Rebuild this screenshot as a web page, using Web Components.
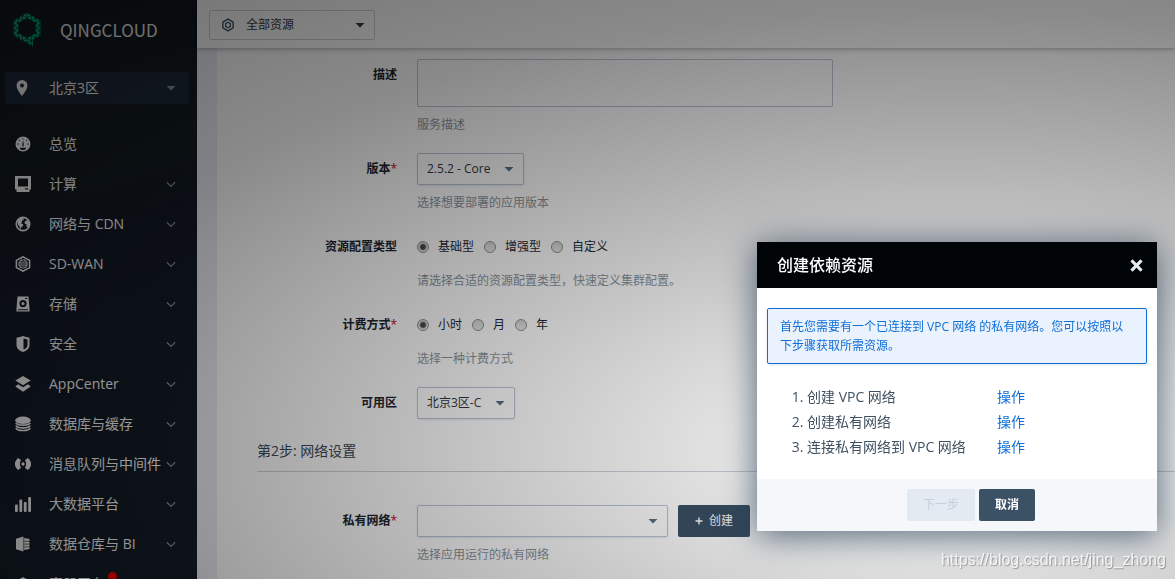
<!DOCTYPE html>
<html lang="zh-CN">
<head>
<meta charset="utf-8">
<title>QingCloud 控制台</title>
<style>
  html, body { height: 100%; margin: 0; }
  body { overflow: hidden; font: 12px/18px "Open Sans", "Noto Sans CJK SC", sans-serif; color: #27333f; background: #fff; }
</style>
</head>
<body>
<qc-app></qc-app>

<script>
const ICONS = {
  pin: '<path fill-rule="evenodd" d="M8 0a5.4 5.4 0 0 0-5.4 5.4C2.600 9.500 8 16 8 16s5.400-6.500 5.400-10.600A5.400 5.400 0 0 0 8 0zm0 3.400a2 2 0 1 1 0 4 2 2 0 0 1 0-4z"/>',
  gauge: '<path fill-rule="evenodd" d="M8 .5a7.500 7.500 0 1 0 0 15 7.500 7.500 0 0 0 0-15zM7.600 2.200h.8v1.400h-.8zM3.500 4.100l.6-.6 1 1-.6.6zM11.900 3.500l.6.6-1 1-.6-.6zM2.200 7.600h1.400v.8H2.200zM12.400 7.600h1.400v.8h-1.400zM7.600 5.500h.8l.3 4.200a.7.700 0 1 1-1.400 0zM5 11.800h6v1.300a5.500 5.500 0 0 1-6 0z"/>',
  compute: '<path fill-rule="evenodd" d="M0 0h16v13.500h-1.500V16h-13v-2.500H0zM3 2.500v8h10v-8zM10 12.300v1.200h3v-1.200z"/>',
  globe: '<circle cx="8" cy="8" r="6.700" fill="none" stroke="currentColor" stroke-width="1.700"/><path d="M2.500 5l3-3.200 3 .4.3 1.600-2 1 .4 1.500-1.600.6 2.800 1.700-.8 2-1.700 1-.4 2.400-1-3.400-1.500-2zM9.500 6.200l1.700-2 2.300.3 1 3.200-1.500 4-1.600-1.200.2-2-1.700-.8z"/>',
  wan: '<path fill="none" stroke="currentColor" stroke-width="1.500" d="M8 .8l6.600 3.600v7.200L8 15.200l-6.600-3.600V4.400z"/><circle cx="8" cy="8" r="4.700"/><path fill="none" stroke="#18212b" stroke-width=".7" d="M8 3.500v9M3.500 8h9M4.500 5.800h7M4.500 10.200h7M8 3.600c-3 3-3 6 0 9M8 3.600c3 3 3 6 0 9"/>',
  disk: '<path fill-rule="evenodd" d="M2.500.5h11l1 12.300v2.700h-13v-2.700zM3 13.200v1h10v-1zM8 4a3.600 3.600 0 1 0 0 7.200A3.600 3.600 0 0 0 8 4zm0 2a1.600 1.600 0 1 1 0 3.200A1.600 1.600 0 0 1 8 6zM10 2v1h2.300V2z"/>',
  shield: '<path fill-rule="evenodd" d="M1.500 1.800Q5 .9 8 0q3 .9 6.500 1.800V9c0 3.700-3 5.700-6.500 7-3.500-1.300-6.500-3.300-6.500-7zM8.500 2.400v11.200c2.300-1.100 4-2.400 4-4.900V3.400z"/>',
  layers: '<path d="M8 0l7.700 4.600L8 9.200.3 4.600z"/><path d="M3 8.300l5 3 5-3 2.700 2.300L8 15.800.3 10.600z"/>',
  db: '<ellipse cx="8" cy="4.300" rx="7.800" ry="3.700"/><path fill="none" stroke="currentColor" stroke-width="1.700" d="M.9 6.800c1 3.200 13.200 3.200 14.200 0M.9 9.400c1 3.200 13.200 3.200 14.200 0M.9 12c1 3.300 13.200 3.300 14.200 0"/>',
  queue: '<circle cx="8" cy="8" r="1.700"/><path d="M3 2L6 4Q3.800 8 6 12L3 14Q-3.400 8 3 2zM13 2L10 4Q12.200 8 10 12L13 14Q19.400 8 13 2z"/>',
  bars: '<rect x="0" y="8.500" width="2.800" height="7.500" rx="1"/><rect x="4.400" y="3.500" width="2.800" height="12.500" rx="1"/><rect x="8.800" y="6" width="2.800" height="10" rx="1"/><rect x="13.200" y="1" width="2.800" height="15" rx="1"/>',
  warehouse: '<path d="M1 2.800L8.500.5v15L1 13.200z"/><path d="M9.200 2l5.300 1v1.800l-1.200.6 1.200.5v1.700l-1.200.5 1.200.5v1.700l-1.200.5 1.200.5v1.700l-5.300 1z"/><path stroke="#18212b" stroke-width=".7" d="M9.500 5.300h4M9.500 8.100h4M9.500 10.900h4"/>',
  cube: '<path d="M8 1l7 4v6.500L8 15.500 1 11.500V5z"/>',
  hex: '<path fill="none" stroke="currentColor" stroke-width="1.600" stroke-linejoin="round" d="M8 1.200l5.900 3.400v6.800L8 14.800l-5.900-3.400V4.600z"/><path fill="none" stroke="currentColor" stroke-width="1.500" d="M8 4.900l2.700 1.500v3.200L8 11.100 5.300 9.600V6.400z"/>',
  chevron: '<path fill="none" stroke="currentColor" stroke-width="1.300" d="M3.800 6.200L8 10.400l4.200-4.200"/>',
  caret: '<path d="M3.500 6h9L8 10.500z"/>',
  close: '<path fill="none" stroke="currentColor" stroke-width="3.800" d="M1.800 1.800l12.400 12.400M14.200 1.800L1.800 14.200"/>',
  plus: '<path fill="none" stroke="currentColor" stroke-width="2.800" d="M8 1v14M1 8h14"/>'
};

class Base extends HTMLElement {
  connectedCallback() {
    if (this.shadowRoot) return;
    this.attachShadow({ mode: 'open' }).innerHTML =
      `<style>*{box-sizing:border-box}:host([hidden]){display:none}${this.css()}</style>${this.html()}`;
  }
  a(name) { return this.getAttribute(name) || ''; }
}

customElements.define('qc-icon', class extends Base {
  css() { return ':host{display:block;flex:none;width:16px;height:16px}svg{display:block;width:100%;height:100%}'; }
  html() { return `<svg viewBox="0 0 16 16" fill="currentColor" aria-hidden="true">${ICONS[this.a('name')]}</svg>`; }
});

customElements.define('qc-logo', class extends Base {
  css() { return `
    :host{display:block}
    a{display:flex;align-items:center;gap:18px;color:#fff;text-decoration:none;
      font:17px/32px "Noto Sans CJK SC",sans-serif}
    svg{width:30px;height:36px;flex:none}
    .word{color:#ececec}`; }
  html() {
    /* Triangular lattice with 5-unit edges, centred on (15,16), cut into the hexagonal ring. */
    let d = '';
    for (let k = -3; k <= 3; k++) d += `M${15 + 4.33 * k} 0v36`;
    for (let k = -7; k <= 7; k++) d += `M0 ${16 + 5 * k - 8.66}L30 ${16 + 5 * k + 8.66}M0 ${16 + 5 * k + 8.66}L30 ${16 + 5 * k - 8.66}`;
    return `<a href="#"><svg viewBox="0 0 30 36" aria-hidden="true">
      <defs><clipPath id="q"><path clip-rule="evenodd" d="M15 .5l13.500 7.800v15.400L21 28v7l-6-4L1.500 23.700V8.300zM15 6l-8.700 5v10l8.700 5 8.700-5V11z"/></clipPath></defs>
      <g clip-path="url(#q)"><path fill="#00c586" d="M0 0h30v36H0z"/><path fill="none" stroke="#12181e" stroke-width=".8" d="${d}"/></g>
    </svg><span class="word">QINGCLOUD</span></a>`; }
});

customElements.define('qc-nav-item', class extends Base {
  css() { return `
    :host{display:block}
    a{display:flex;align-items:center;height:40px;padding:0 18px 0 15px;color:#fff;text-decoration:none;font-size:14px;line-height:20px}
    .text{position:relative;margin-left:18px;flex:1;white-space:nowrap}
    .more{width:16px;color:#8490a0;margin-left:-16px}
    .dot{position:absolute;left:59px;top:-2px;width:9px;height:9px;border-radius:50%;background:#f00}`; }
  html() { return `
    <a href="#"><qc-icon name="${this.a('icon')}"></qc-icon>
      <span class="text"><slot></slot>${this.hasAttribute('badge') ? '<i class="dot"></i>' : ''}</span>
      ${this.hasAttribute('leaf') ? '' : '<qc-icon class="more" name="chevron"></qc-icon>'}</a>`; }
});

customElements.define('qc-sidebar', class extends Base {
  css() { return `
    :host{display:block;width:197px;flex:none;overflow:hidden;background:linear-gradient(165deg,#12181e 0,#141d22 30%,#141a28 45%,#151f29 100%)}
    qc-logo{padding:12px 12px 24px}
    .zone{display:flex;align-items:center;width:184px;height:32px;margin:0 5px 20px;padding:0 10px 0 9px;border:0;border-radius:2px;
      background:#1f2a3a;color:#f4f4f4;font:inherit;font-size:14px}
    .zone span{flex:1;text-align:left;margin-left:19px}
    .zone .more{width:16px;color:#8490a0}
    nav{display:block}`; }
  html() {
    const items = [['gauge','总览','leaf'],['compute','计算'],['globe','网络与 CDN'],['wan','SD-WAN'],['disk','存储'],['shield','安全'],
      ['layers','AppCenter'],['db','数据库与缓存'],['queue','消息队列与中间件'],['bars','大数据平台'],['warehouse','数据仓库与 BI'],['cube','容器平台','leaf badge']];
    return `<qc-logo></qc-logo>
      <button class="zone" type="button"><qc-icon name="pin"></qc-icon><span>北京3区</span><qc-icon class="more" name="caret"></qc-icon></button>
      <nav>${items.map(i => `<qc-nav-item icon="${i[0]}" ${i[2] || ''}>${i[1]}</qc-nav-item>`).join('')}</nav>`;
  }
});

customElements.define('qc-topbar', class extends Base {
  css() { return `
    :host{display:flex;align-items:center;height:48px;flex:none;padding:2px 12px 0;background:#fff;box-shadow:0 1px 5px rgba(0,0,0,.3);z-index:1}
    button{display:flex;align-items:center;width:166px;height:30px;padding:0 6px 0 11px;border:1px solid #ccd3db;border-radius:2px;
      background:#fff;color:#343945;font:inherit}
    span{flex:1;text-align:left;margin-left:11px}
    .hex{width:14px;height:14px;color:#40566c}`; }
  html() { return '<button type="button"><qc-icon class="hex" name="hex"></qc-icon><span>全部资源</span><qc-icon name="caret"></qc-icon></button>'; }
});

customElements.define('qc-button', class extends Base {
  css() { return `
    :host{display:block}
    button{display:flex;align-items:center;justify-content:center;gap:6px;height:32px;width:100%;padding:0 16px;border:0;border-radius:2px;
      background:#3b5166;color:#fff;font:inherit;white-space:nowrap}
    :host([strong]) button{font-weight:600}
    qc-icon{width:8px;height:8px}
    button:disabled{background:#e3eaf1;color:#c3cfda}`; }
  html() { return `<button type="button" ${this.hasAttribute('disabled') ? 'disabled' : ''}>${this.a('icon') ? `<qc-icon name="${this.a('icon')}"></qc-icon>` : ''}<slot></slot></button>`; }
});

customElements.define('qc-field', class extends Base {
  css() { return `
    :host{display:grid;grid-template-columns:140px minmax(0,1fr);column-gap:20px;margin-bottom:19px}
    .label{text-align:right;font-weight:600;line-height:32px;color:#1d2630}
    .label b{color:#d0021b;font-weight:400}
    .control{display:flex;align-items:center;gap:10px;min-height:32px}
    textarea,select{display:block;border:1px solid #bcc7d6;border-radius:2px;background:#fff;color:#343945;font:inherit}
    textarea{width:416px;max-width:100%;height:48px;resize:none}
    select{appearance:none;width:100%;height:32px;padding:0 24px 0 9px;box-shadow:0 1px 2px rgba(57,76,96,.12)}
    .select{position:relative}
    .s{width:98px}.m{width:107px}.l{width:251px}
    .select qc-icon{position:absolute;right:7px;top:8px;width:16px;height:16px;color:#5b7086;pointer-events:none}
    .radio{display:flex;align-items:center;gap:9px;color:#1f2b38}
    input{appearance:none;width:12px;height:12px;margin:0;border:1px solid #909090;border-radius:50%;background:linear-gradient(#d4d4d4,#ececec)}
    input:checked{background:radial-gradient(circle,#484848 0 2px,transparent 4px),linear-gradient(#d4d4d4,#ececec)}
    .hint{grid-column:2;margin:9px 0 0;color:#8c96a0}`; }
  html() {
    const kind = this.a('kind'), opts = this.a('options').split('|');
    const text = this.a('label') + (this.hasAttribute('required') ? '<b>*</b>' : '');
    let label = `<label class="label" for="c">${text}</label>`, control;
    if (kind === 'textarea') control = '<textarea id="c"></textarea>';
    else if (kind === 'select') control = `<div class="select ${this.a('size')}"><select id="c">${opts.map(o => `<option>${o}</option>`).join('')}</select><qc-icon name="caret"></qc-icon></div>`;
    else {
      label = `<span class="label" id="l">${text}</span>`;
      control = opts.map((o, i) => `<label class="radio"><input type="radio" name="r" ${i ? '' : 'checked'}><span>${o}</span></label>`).join('');
    }
    return `${label}<div class="control" ${kind === 'radio' ? 'role="radiogroup" aria-labelledby="l"' : ''}>${control}<slot></slot></div>
      ${this.a('hint') ? `<p class="hint">${this.a('hint')}</p>` : ''}`;
  }
});

customElements.define('qc-form', class extends Base {
  css() { return `
    :host{display:block;flex:1;min-height:0;overflow:hidden;padding-left:20px;background:#eceff5}
    form{min-height:100%;padding:11px 0 0 40px;background:#fff}
    h2{margin:0 0 33px;padding-bottom:8px;border-bottom:1px solid #ccd3db;font-size:14px;line-height:25px;font-weight:400;color:#3b4a59}
    qc-button{width:72px}`; }
  html() { return `<form>
    <qc-field kind="textarea" label="描述" hint="服务描述"></qc-field>
    <qc-field kind="select" size="m" label="版本" required options="2.5.2 - Core" hint="选择想要部署的应用版本"></qc-field>
    <qc-field kind="radio" label="资源配置类型" options="基础型|增强型|自定义" hint="请选择合适的资源配置类型，快速定义集群配置。"></qc-field>
    <qc-field kind="radio" label="计费方式" required options="小时|月|年" hint="选择一种计费方式"></qc-field>
    <qc-field kind="select" size="s" label="可用区" options="北京3区-C"></qc-field>
    <h2>第2步: 网络设置</h2>
    <qc-field kind="select" size="l" label="私有网络" required hint="选择应用运行的私有网络"><qc-button icon="plus">创建</qc-button></qc-field>
  </form>`; }
});

customElements.define('qc-dialog', class extends Base {
  css() { return `
    :host{display:block;width:400px;background:#fff;box-shadow:0 4px 32px rgba(30,55,80,.75)}
    header{display:flex;align-items:center;justify-content:space-between;height:46px;padding:0 14px 0 20px;background:#000407;color:#fff}
    h1{margin:0;font-size:16px;line-height:24px;font-weight:500}
    header button{padding:0;border:0;background:none;color:#e4ebf1}
    header qc-icon{width:13px;height:13px}
    .body{padding:20px 10px}
    .note{margin:0 0 20px;padding:8px 12px;border:1px solid #0f6fd6;border-radius:2px;background:#eaf2fe;color:#0f6fd6;line-height:19px;
      box-shadow:0 1px 3px rgba(57,76,96,.15)}
    ol{margin:0;padding-left:40px;font-size:14px;line-height:25px;color:#3f5061}
    .step{display:grid;grid-template-columns:190px auto;white-space:nowrap}
    .step a{color:#0f6fd6;text-decoration:none}
    footer{display:flex;justify-content:center;gap:4px;padding:10px 8px 10px 36px;background:#f5f7fb}
    .next{width:68px}.cancel{width:56px}`; }
  html() { return `
    <header><h1 id="t">创建依赖资源</h1><button type="button" aria-label="关闭"><qc-icon name="close"></qc-icon></button></header>
    <div class="body">
      <p class="note">首先您需要有一个已连接到 VPC 网络 的私有网络。您可以按照以下步骤获取所需资源。</p>
      <ol>${['创建 VPC 网络', '创建私有网络', '连接私有网络到 VPC 网络'].map(s => `<li><div class="step"><span>${s}</span><a href="#">操作</a></div></li>`).join('')}</ol>
    </div>
    <footer><qc-button class="next" disabled>下一步</qc-button><qc-button class="cancel" strong>取消</qc-button></footer>`; }
});

customElements.define('qc-app', class extends Base {
  css() { return `
    :host{display:flex;height:100vh;overflow:hidden}
    .main{display:flex;flex-direction:column;flex:1;min-width:0}
    .shade{position:fixed;z-index:2;inset:0;background:radial-gradient(174% 166% at 81% 78%,rgba(0,0,0,0) 0,rgba(0,0,0,.25) 25%,rgba(0,0,0,.46) 46%,rgba(0,0,0,.56) 66%)}
    qc-dialog{position:fixed;z-index:3;right:18px;bottom:48px}
    .mark{position:fixed;z-index:4;right:9px;bottom:8px;font:16px/22px "Liberation Sans",sans-serif;color:rgba(255,255,255,.8);text-shadow:1px 1px 1px rgba(0,0,0,.3)}`; }
  html() { return `
    <qc-sidebar></qc-sidebar>
    <div class="main"><qc-topbar></qc-topbar><qc-form></qc-form></div>
    <div class="shade"></div>
    <qc-dialog role="dialog" aria-label="创建依赖资源"></qc-dialog>
    <div class="mark">https://blog.csdn.net/jing_zhong</div>`; }
});
</script>
</body>
</html>
